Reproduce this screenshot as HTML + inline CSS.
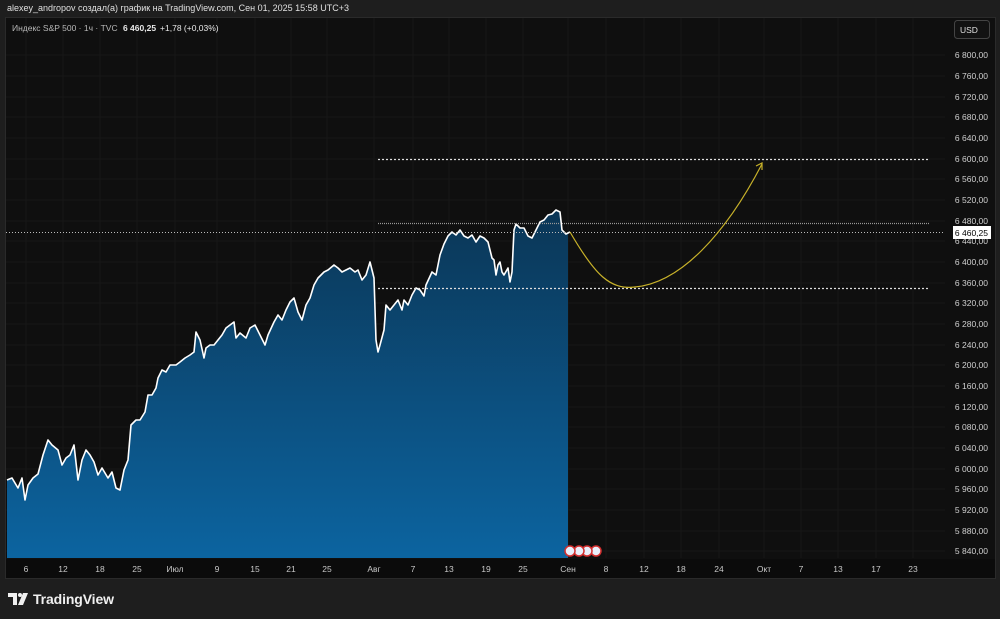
<!DOCTYPE html>
<html><head><meta charset="utf-8"><style>
body{margin:0;width:1000px;height:619px;background:#1e1e1e;font-family:"Liberation Sans",sans-serif;overflow:hidden;position:relative}
.t{position:absolute;color:#d8d8d8;font-size:9px;white-space:nowrap}
</style></head><body>
<div class="t" style="left:7px;top:3px;font-size:9px;color:#e0e0e0">alexey_andropov создал(а) график на TradingView.com, Сен 01, 2025 15:58 UTC+3</div>
<svg width="1000" height="619" style="position:absolute;left:0;top:0" font-family="Liberation Sans, sans-serif">
<defs><linearGradient id="g" x1="0" y1="0" x2="0" y2="1"><stop offset="0" stop-color="#0b3656"/><stop offset="1" stop-color="#0c64a0"/></linearGradient></defs>
<rect x="5.5" y="17.5" width="990" height="561" fill="#0f0f0f" stroke="#2a2a2a"/>
<rect x="6" y="559" width="989" height="19" fill="#0b0b0b"/>
<g stroke="#171717" stroke-width="1">
<path d="M26 18V558M63 18V558M100 18V558M137 18V558M175 18V558M217 18V558M255 18V558M291 18V558M327 18V558M374 18V558M413 18V558M449 18V558M486 18V558M523 18V558M568 18V558M606 18V558M644 18V558M681 18V558M719 18V558M764 18V558M801 18V558M838 18V558M876 18V558M913 18V558"/>
<path d="M6 55H945M6 76H945M6 97H945M6 117H945M6 138H945M6 159H945M6 179H945M6 200H945M6 221H945M6 241H945M6 262H945M6 283H945M6 303H945M6 324H945M6 345H945M6 365H945M6 386H945M6 407H945M6 427H945M6 448H945M6 469H945M6 489H945M6 510H945M6 531H945M6 551H945"/>
</g>
<polygon fill="url(#g)" points="7,558 7,480 12,478 18,488 22,478 25,500 28,485 33,478 38,474 43,455 48,440 52,445 58,450 62,465 66,458 70,455 74,445 78,480 82,460 86,450 90,455 94,462 98,475 102,468 108,478 112,472 116,488 120,490 124,470 128,460 131,425 136,420 140,420 145,412 148,395 152,395 156,388 158,378 162,370 166,372 170,365 176,365 180,362 185,358 190,355 194,352 196,332 200,340 204,358 206,348 210,345 214,345 218,340 222,335 226,328 230,325 234,322 236,338 240,333 246,338 250,328 255,325 260,335 265,345 268,335 274,322 278,315 282,320 286,310 290,302 294,298 298,312 302,320 306,305 310,298 314,285 318,278 324,272 328,270 334,265 338,268 342,272 346,270 350,268 355,272 358,270 362,280 366,275 370,262 374,278 376,340 378,352 380,345 384,330 386,305 390,310 394,305 398,300 402,310 404,300 408,305 412,295 416,288 420,290 424,296 426,285 432,272 436,275 440,255 444,244 448,236 452,232 456,235 460,230 464,236 468,238 472,235 476,242 480,236 484,238 488,242 492,258 494,260 496,275 498,265 500,262 502,272 504,275 508,268 510,282 512,272 514,230 516,224 520,228 524,228 528,236 532,238 536,230 540,222 544,220 548,215 552,214 556,210 560,212 562,230 566,234 568,232 568,558"/>
<polyline fill="none" stroke="#fff" stroke-width="1.6" stroke-linejoin="round" points="7,480 12,478 18,488 22,478 25,500 28,485 33,478 38,474 43,455 48,440 52,445 58,450 62,465 66,458 70,455 74,445 78,480 82,460 86,450 90,455 94,462 98,475 102,468 108,478 112,472 116,488 120,490 124,470 128,460 131,425 136,420 140,420 145,412 148,395 152,395 156,388 158,378 162,370 166,372 170,365 176,365 180,362 185,358 190,355 194,352 196,332 200,340 204,358 206,348 210,345 214,345 218,340 222,335 226,328 230,325 234,322 236,338 240,333 246,338 250,328 255,325 260,335 265,345 268,335 274,322 278,315 282,320 286,310 290,302 294,298 298,312 302,320 306,305 310,298 314,285 318,278 324,272 328,270 334,265 338,268 342,272 346,270 350,268 355,272 358,270 362,280 366,275 370,262 374,278 376,340 378,352 380,345 384,330 386,305 390,310 394,305 398,300 402,310 404,300 408,305 412,295 416,288 420,290 424,296 426,285 432,272 436,275 440,255 444,244 448,236 452,232 456,235 460,230 464,236 468,238 472,235 476,242 480,236 484,238 488,242 492,258 494,260 496,275 498,265 500,262 502,272 504,275 508,268 510,282 512,272 514,230 516,224 520,228 524,228 528,236 532,238 536,230 540,222 544,220 548,215 552,214 556,210 560,212 562,230 566,234 570,232"/>
<line x1="378" y1="159.5" x2="930" y2="159.5" stroke="#ddd" stroke-width="1.3" stroke-dasharray="2 2"/>
<line x1="378" y1="223.5" x2="930" y2="223.5" stroke="#999" stroke-width="1.3" stroke-dasharray="1 1"/>
<line x1="378" y1="288.5" x2="930" y2="288.5" stroke="#ddd" stroke-width="1.3" stroke-dasharray="2 2"/>
<line x1="6" y1="232.5" x2="945" y2="232.5" stroke="#bbb" stroke-width="1" stroke-dasharray="1 2"/>
<path d="M570 232 C595 275 610 290 635 287 C680 283 725 235 762 164" fill="none" stroke="#c8b22a" stroke-width="1.2"/>
<path d="M756 166 L762 163 L762 170" fill="none" stroke="#c8b22a" stroke-width="1.2"/>
<g stroke="#d32f2f" stroke-width="1.5" fill="#e8eefa">
<circle cx="596" cy="551" r="5"/><circle cx="587" cy="551" r="5"/><circle cx="579" cy="551" r="5"/><circle cx="570" cy="551" r="5"/></g>
<g font-size="8.5" fill="#d0d0d0" text-anchor="end">
<text x="988" y="58">6 800,00</text><text x="988" y="79">6 760,00</text><text x="988" y="100">6 720,00</text><text x="988" y="120">6 680,00</text><text x="988" y="141">6 640,00</text><text x="988" y="162">6 600,00</text><text x="988" y="182">6 560,00</text><text x="988" y="203">6 520,00</text><text x="988" y="224">6 480,00</text><text x="988" y="244">6 440,00</text><text x="988" y="265">6 400,00</text><text x="988" y="286">6 360,00</text><text x="988" y="306">6 320,00</text><text x="988" y="327">6 280,00</text><text x="988" y="348">6 240,00</text><text x="988" y="368">6 200,00</text><text x="988" y="389">6 160,00</text><text x="988" y="410">6 120,00</text><text x="988" y="430">6 080,00</text><text x="988" y="451">6 040,00</text><text x="988" y="472">6 000,00</text><text x="988" y="492">5 960,00</text><text x="988" y="513">5 920,00</text><text x="988" y="534">5 880,00</text><text x="988" y="554">5 840,00</text>
</g>
<rect x="953" y="226" width="38" height="13" fill="#fff"/>
<text x="988" y="236" font-size="8.5" fill="#000" text-anchor="end">6 460,25</text>
<rect x="954.5" y="20.5" width="35" height="18" rx="3" fill="#121212" stroke="#444"/>
<text x="960" y="33" font-size="8.5" fill="#e0e0e0">USD</text>
<g font-size="8.5" fill="#c8c8c8" text-anchor="middle">
<text x="26" y="572">6</text><text x="63" y="572">12</text><text x="100" y="572">18</text><text x="137" y="572">25</text><text x="175" y="572">Июл</text><text x="217" y="572">9</text><text x="255" y="572">15</text><text x="291" y="572">21</text><text x="327" y="572">25</text><text x="374" y="572">Авг</text><text x="413" y="572">7</text><text x="449" y="572">13</text><text x="486" y="572">19</text><text x="523" y="572">25</text><text x="568" y="572">Сен</text><text x="606" y="572">8</text><text x="644" y="572">12</text><text x="681" y="572">18</text><text x="719" y="572">24</text><text x="764" y="572">Окт</text><text x="801" y="572">7</text><text x="838" y="572">13</text><text x="876" y="572">17</text><text x="913" y="572">23</text>
</g>
<text x="12" y="31" font-size="8.5" fill="#b8b8b8">Индекс S&amp;P 500 · 1ч · TVC <tspan fill="#e8e8e8" font-weight="bold" dx="3">6 460,25</tspan><tspan fill="#e8e8e8" dx="4">+1,78 (+0,03%)</tspan></text>
<g fill="#f0f0f0"><path d="M8 593H17V605H13V597H8Z"/><circle cx="20" cy="595" r="2"/><path d="M23 593H28L23 605H18Z"/></g>
<text x="33" y="604" font-size="14" fill="#f0f0f0" font-weight="bold" textLength="81">TradingView</text>
</svg>
</body></html>
